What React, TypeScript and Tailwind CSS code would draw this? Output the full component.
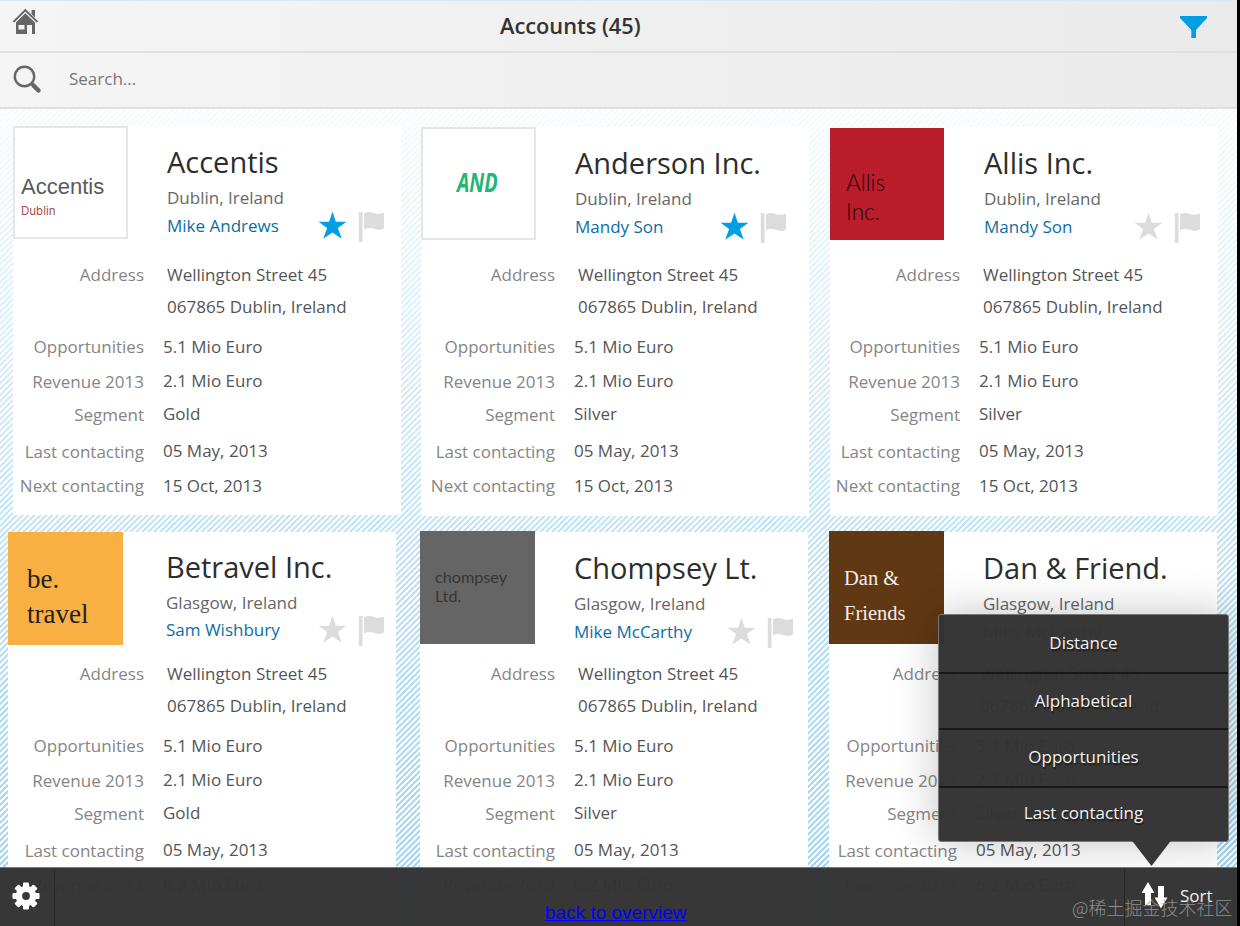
import React from "react";

type Account = {
  name: string;
  city: string;
  person: string;
  segment: string;
  starred: boolean;
  logo: React.ReactNode;
  card: string;
  logoBox: string;
  text: string;
  lines: string;
  icons: string;
  details: string;
  labels: string;
  last: string;
};

function Star({ active }: { active: boolean }) {
  return (
    <svg className={active ? "text-[#009fe3]" : "text-[#dcdcdc]"} width="29" height="29" viewBox="0 0 29 29">
      <path fill="currentColor" d="M14.5 0.5 17.8 10.8H28.5L19.9 17.1 23.7 27.8 14.500 21.400 5.200 27.800 9.100 17.100.5 10.800H11.100Z" />
    </svg>
  );
}

function Flag() {
  return (
    <svg width="27" height="32" viewBox="0 0 27 32" fill="#dcdcdc">
      <path d="M.8 1H4.500V31H.8ZM6 2.200C9 .6 12.500 .6 16 2 19.500 3.300 23 3 26 1.600V17.500C23 19.300 19.500 19.300 16 17.800 12.500 16.500 9 16.700 6 18.300Z" />
    </svg>
  );
}

function Row({ label, value, first, low, labels, className }: { label: string; value: string; first?: boolean; low?: boolean; labels: string; className: string }) {
  return (
    <div className={`flex h-8 items-start text-[17px] leading-8 whitespace-nowrap ${className}`}>
      <div className={`shrink-0 text-right text-[#858585] ${low ? "mt-px" : ""} ${labels}`}>{label}</div>
      <div className={`text-[#555] ${first ? "ml-[23px]" : "ml-[19px]"}`}>{value}</div>
    </div>
  );
}

function Card({ a }: { a: Account }) {
  return (
    <article className={`shrink-0 bg-white ${a.card}`}>
      <div className="flex h-[112px] items-start">
        <div className={`shrink-0 ${a.logoBox}`}>{a.logo}</div>
        <div className={`flex-1 whitespace-nowrap ${a.text}`}>
          <h2 className="text-[29px] leading-10 text-[#2d2d2d]">{a.name}</h2>
          <p className="mt-[2px] text-[17px] leading-7 text-[#666]">{a.city}</p>
          <div className={`flex h-7 items-start ${a.lines}`}>
            <a className="text-[17px] leading-7 text-[#0a6ea5]">{a.person}</a>
            <div className={`-mt-px flex items-start gap-[11px] ${a.icons}`}>
              <Star active={a.starred} />
              <Flag />
            </div>
          </div>
        </div>
      </div>
      <div className={a.details}>
        <Row label="Address" value="Wellington Street 45" first labels={a.labels} className="" />
        <Row label="" value="067865 Dublin, Ireland" first labels={a.labels} className="" />
        <Row label="Opportunities" value="5.1 Mio Euro" labels={a.labels} className="mt-2" />
        <Row label="Revenue 2013" value="2.1 Mio Euro" low labels={a.labels} className="mt-[2px]" />
        <Row label="Segment" value={a.segment} low labels={a.labels} className="mt-px" />
        <Row label="Last contacting" value="05 May, 2013" low labels={a.labels} className="mt-[5px]" />
        {a.last === "next" ? (
          <Row label="Next contacting" value="15 Oct, 2013" labels={a.labels} className="mt-[3px]" />
        ) : (
          <Row label="Revenue 2012" value="6.2 Mio Euro" labels={a.labels} className="mt-[3px]" />
        )}
      </div>
    </article>
  );
}

const firstRow: Account[] = [
  {
    name: "Accentis", city: "Dublin, Ireland", person: "Mike Andrews", segment: "Gold", starred: true,
    card: "mt-[17px] ml-[13px] h-[389px] w-[388px]",
    logoBox: "h-[113px] w-[115px] border-2 border-[#e6e6e6] pt-[45px] pl-[6px]",
    logo: (
      <div className="whitespace-nowrap">
        <div className="font-['Liberation_Sans'] text-[22px] leading-7 text-[#5a5a5a]">Accentis</div>
        <div className="font-['Inter'] text-[11.5px] leading-5 text-[#a84a4a]">Dublin</div>
      </div>
    ),
    text: "pt-4 pl-[39px]", lines: "", icons: "ml-auto mr-[16px]",
    details: "mt-[21px]", labels: "w-[131px]", last: "next",
  },
  {
    name: "Anderson Inc.", city: "Dublin, Ireland", person: "Mandy Son", segment: "Silver", starred: true,
    card: "mt-[18px] ml-[20px] h-[389px] w-[388px]",
    logoBox: "flex h-[113px] w-[115px] items-center justify-center border-2 border-[#e6e6e6] pb-[3px]",
    logo: <div className="-ml-[3px] scale-x-[.72] text-[27.5px] font-bold text-[#22b573] italic">AND</div>,
    text: "pt-4 pl-[39px]", lines: "", icons: "ml-auto mr-[22px]",
    details: "mt-[20px]", labels: "w-[134px]", last: "next",
  },
  {
    name: "Allis Inc.", city: "Dublin, Ireland", person: "Mandy Son", segment: "Silver", starred: false,
    card: "mt-[18px] ml-[21px] h-[389px] w-[388px]",
    logoBox: "mt-px h-[112px] w-[114px] bg-[#ba1e2d] pt-[40px] pl-4",
    logo: <div className="font-['Lato'] text-[22.5px] leading-[29px] font-light text-[#190508]">Allis<br />Inc.</div>,
    text: "pt-4 pl-[40px]", lines: "", icons: "ml-auto mr-[17px]",
    details: "mt-[20px]", labels: "w-[130px]", last: "next",
  },
];

const secondRow: Account[] = [
  {
    name: "Betravel Inc.", city: "Glasgow, Ireland", person: "Sam Wishbury", segment: "Gold", starred: false,
    card: "mt-[17px] ml-2 h-[395px] w-[388px]",
    logoBox: "h-[113px] w-[115px] bg-[#f9b042] pt-[30px] pl-[19px]",
    logo: <div className="font-['Liberation_Serif'] text-[27px] leading-[35px] text-[#222]">be.<br />travel</div>,
    text: "pt-[15px] pl-[43px]", lines: "-mt-px", icons: "ml-auto mr-[11px]",
    details: "mt-[14px]", labels: "w-[136px]", last: "old",
  },
  {
    name: "Chompsey Lt.", city: "Glasgow, Ireland", person: "Mike McCarthy", segment: "Silver", starred: false,
    card: "mt-[17px] ml-[24px] h-[395px] w-[388px]",
    logoBox: "-mt-px h-[113px] w-[115px] bg-[#656565] pt-[36px] pl-[15px]",
    logo: <div className="font-['Lato'] text-[16.2px] leading-[19px] text-[#363636]">chompsey<br />Ltd.</div>,
    text: "pt-4 pl-[39px]", lines: "", icons: "ml-auto mr-[14px]",
    details: "mt-[14px]", labels: "w-[135px]", last: "old",
  },
  {
    name: "Dan & Friend.", city: "Glasgow, Ireland", person: "Mike McCarthy", segment: "Silver", starred: false,
    card: "mt-[17px] ml-[21px] h-[395px] w-[388px]",
    logoBox: "-mt-px h-[113px] w-[115px] bg-[#603813] pt-[30px] pl-[15px]",
    logo: <div className="font-['Liberation_Serif'] text-[20.5px] leading-[35px] text-[#f5eee8]">Dan &amp;<br />Friends</div>,
    text: "pt-4 pl-[39px]", lines: "", icons: "ml-auto mr-[13px]",
    details: "mt-[14px]", labels: "w-[128px]", last: "old",
  },
];

export default function App() {
  return (
    <div className="flex h-[926px] w-[1240px] overflow-hidden bg-black font-['Open_Sans',sans-serif]">
      <div className="relative flex w-[1237px] flex-col overflow-hidden">
        <header className="flex h-[53px] shrink-0 items-center border-t border-b-2 border-t-[#dbe8f2] border-b-[#dfdfdf] bg-linear-to-r from-[#f5f5f5] to-[#eaeaea]">
          <svg className="-mt-2 ml-3 w-[27px]" height="28" viewBox="0 0 27 28">
            <path fill="#666" d="M19.500 2H23V9.500L19.500 6ZM.5 13.500 13.300.8 26.300 13.600 24.700 14.500 13.300 3.400 2.300 14.500ZM13.300 5.200 23 14.600V26H20V17H15V26H4V14.500ZM6.500 17V21.500H12.500V17Z" />
          </svg>
          <h1 className="ml-[461px] text-[21.8px] font-semibold text-[#333]">Accounts (45)</h1>
          <svg className="mt-px mr-[29px] ml-auto" width="29" height="24" viewBox="0 0 29 24">
            <path fill="#009fe3" d="M1 1H28V3L17 15V23H12.300V15L1 3Z" />
          </svg>
        </header>
        <div className="flex h-[56px] shrink-0 items-center border-b-2 border-[#dfdfdf] bg-linear-to-r from-[#f5f5f5] to-[#eaeaea] pb-px">
          <svg className="ml-[13px]" width="29" height="29" viewBox="0 0 29 29" fill="none" stroke="#666">
            <circle cx="11.500" cy="11.500" r="9.700" strokeWidth="2.400" />
            <path d="M18.500 18.500 21 21" strokeWidth="2.600" />
            <path d="M20.500 20.500 25.500 25.500" strokeWidth="4.500" strokeLinecap="round" />
          </svg>
          <span className="mb-[2px] ml-[27px] text-[17px] text-[#777]">Search...</span>
        </div>
        <main className="shrink-0 bg-[linear-gradient(to_bottom,rgba(255,255,255,.9)_0%,rgba(255,255,255,.35)_50%,rgba(255,255,255,0)_90%),repeating-linear-gradient(135deg,#a6d6f0_0px,#a6d6f0_1.400px,#ffffff_2.300px,#ffffff_3.500px,#a6d6f0_4.200px)]">
          <div className="flex h-[406px] items-start">
            {firstRow.map((a) => <Card key={a.name} a={a} />)}
          </div>
          <div className="flex h-[412px] items-start">
            {secondRow.map((a) => <Card key={a.name} a={a} />)}
          </div>
        </main>

        <nav className="absolute top-[614px] left-[938px] w-[291px] rounded-[3px] border border-[#777] bg-[rgba(50,50,50,.975)] text-center text-[17px] text-[#f2f2f2] shadow-[0_0_46px_rgba(0,0,0,.24)] [text-shadow:1px_2px_1px_#1c1c1c]">
          <div className="h-[59px] border-b-2 border-[#181818] leading-[56px]">Distance</div>
          <div className="h-[56px] border-b-2 border-[#181818] leading-[54px]">Alphabetical</div>
          <div className="h-[58px] border-b-2 border-[#181818] leading-[54px]">Opportunities</div>
          <div className="h-[53px] leading-[49px]">Last contacting</div>
        </nav>
        <svg className="absolute top-[840px] left-[1131px]" width="41" height="28" viewBox="0 0 41 28">
          <path fill="#373737" d="M.5 0H40.500L20.500 26Z" />
        </svg>

        <footer className="absolute top-[867px] left-0 flex h-[59px] w-full items-center border-t border-[#777] bg-[rgba(50,50,50,.975)]">
          <div className="flex h-full w-[55px] items-center border-r border-[#292929] pb-[2px] pl-3">
            <svg width="28" height="28" viewBox="-14 -14 28 28" fill="white">
              {[0, 45, 90, 135].map((r) => <rect key={r} x="-3" y="-13.500" width="6" height="27" rx="1" transform={`rotate(${r})`} />)}
              <circle r="10.300" />
              <circle r="3.900" fill="#373737" />
            </svg>
          </div>
          <a className="mt-[31px] ml-[490px] font-['Liberation_Sans'] text-[19px] leading-[22px] whitespace-nowrap text-[#0000ff] underline">back to overview</a>
          <div className="ml-auto flex h-full w-[113px] items-center border-l border-[#292929] pb-[3px] pl-4 text-[17px] text-[#f2f2f2]">
            <svg width="27" height="27" viewBox="0 0 27 27" fill="white">
              <path d="M7 0 13.500 11H10V23H4V11H.5ZM17 4H23V15.500H26.500L20 26.500 13.500 15.500H17Z" />
            </svg>
            <span className="ml-3">Sort</span>
          </div>
        </footer>
      </div>
      <div className="absolute top-[895px] left-[1072px] font-['Noto_Sans_CJK_SC',sans-serif] text-[18px] leading-6 font-light whitespace-nowrap text-[#a5a5a5]/80">@稀土掘金技术社区</div>
    </div>
  );
}
